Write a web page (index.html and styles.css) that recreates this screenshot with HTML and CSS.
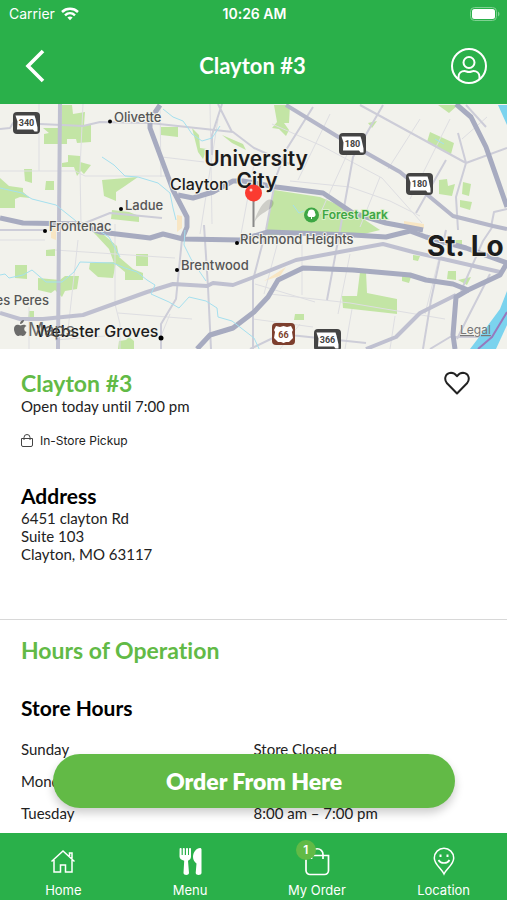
FILE: index.html
```
<!DOCTYPE html>
<html lang="en">
<head>
    <meta charset="UTF-8">
    <meta content="width=device-width, initial-scale=1.0" name="viewport">
    <title>Clayton #3</title>
    <link rel="stylesheet" href="styles.css">
</head>
<body>
<div class="screen">
    <header class="top">
        <div class="status-bar">
            <div class="carrier">
                <span>Carrier</span>
                <svg width="18" height="14" viewBox="0 0 18 14" fill="none" stroke="#fff" stroke-width="2.5" aria-hidden="true">
                    <path d="M1 5C5.500.800 12.500.800 17 5"/>
                    <path d="M4 8.300c2.900-2.700 7.100-2.700 10 0"/>
                    <path d="M6.400 10.400c1.500-1.300 3.700-1.300 5.200 0L9 13.300z" fill="#fff" stroke="none"/>
                </svg>
            </div>
            <span class="time">10:26 AM</span>
            <svg class="battery" width="30" height="14" viewBox="0 0 30 14" aria-hidden="true">
                <rect x=".5" y=".5" width="26" height="13" rx="4" fill="none" stroke="#7fd192"/>
                <rect x="2" y="2" width="23" height="10" rx="2.500" fill="#fff"/>
                <path d="M28 4.500c2 1 2 4 0 5z" fill="#7fd192"/>
            </svg>
        </div>
        <div class="nav-bar">
            <button class="icon-button" type="button" aria-label="Back">
                <svg width="36" height="36" viewBox="0 0 36 36" fill="none" stroke="#fff" stroke-width="3.600">
                    <path d="M25 3L10 18l15 15"/>
                </svg>
            </button>
            <h1>Clayton #3</h1>
            <button class="icon-button" type="button" aria-label="Account">
                <svg width="36" height="36" viewBox="0 0 36 36" fill="none" stroke="#fff" stroke-width="2">
                    <circle cx="18" cy="18" r="17"/>
                    <circle cx="18" cy="14.500" r="5.500"/>
                    <path d="M7.500 31v-2c0-4 3-6 6-6 1.500 0 2.500 1 4.500 1s3-1 4.500-1c3 0 6 2 6 6v2"/>
                </svg>
            </button>
        </div>
    </header>

    <main>
        <svg class="map" viewBox="0 0 507 245" preserveAspectRatio="xMidYMid slice" role="img" aria-label="Map of Clayton">
            <defs>
                <g id="state-shield">
                    <rect width="27" height="22" rx="4"/>
                    <path d="M2.500 3.500h19l1 3 2 9v4h-3l-1.500-2H4l.5-8z"/>
                </g>
            </defs>
            <rect class="land" x="-300" width="1107" height="245"/>

            <!-- parks -->
            <g class="park">
                <path d="M62 1l10 0 1 9 12-2-1 13 7 0v17l-14 1-1-4-9 0v5l-23 0 0-10 5-1-6-5 18 0z"/>
                <path d="M161 23h17v10l-17-2zM62 59l6-1v-7l12 1v6l11 3-7 9-3-3-4 5-3-9-12 0z"/>
                <path d="M24 65l8 0v14l-7-2zM46 77h8v9h-9zM0 74l9 8 14 2v4l7 6-10-1-5 2v9l-15 0z"/>
                <path d="M102 76l36-3-13 9-9 6 0 9-12-5zM112 106l17 2 10 4v6l-28-3z"/>
                <path d="M192 24l7 7 1 13 7 1-4 10-5-7zM222 31l21 9 3 6-14-7z"/>
                <path d="M274 1l16 0-1 18-5 0 5 7-3 6-7-7-7-1 5-6z"/>
                <path d="M266 126l8-40 46 7 30 13 30 20-20 5H266z"/>
                <path d="M430 28l24 11-3 11-24-12zM438 1h20l-9 8zM368 19l9-2-5 7zM439 76l8-1 1 7 7-2-3 12-13-2zM463 78l8 2-2 12-7-2zM460 96l12 2-2 8-10-3z"/>
                <path d="M90 159l26-1-3 16-15-1-9-8zM136 150l12 0v12l-12 0zM15 161l12 0v14l-12-1zM38 174l22 2 5-4h14l-2 13-12 2-3 6-7-7-4 3-13-3zM46 146l9-1v7h-9zM29 207h5v9l-6-1z"/>
                <path d="M93 128l11 3 13 11 2 11 14 12 10 4v7h-18v-8l-11-9-5-14-13-14zM119 237l7-1 3-3 5 4v8h-16z"/>
                <path d="M360 168l6 0 1 21 30 6v15l-54-6-1-12 15 0zM295 210h9v6h-10zM448 167l8 0v9l-9-1zM402 171l9 2-2 6-7-2zM413 151l7 1-2 5-5-1zM458 176l13-3-4 8zM455 136l7 0v7h-7z"/>
            </g>
            <path class="sand" d="M177 111l5 1v12l-5 4zM51 121h5v15l-5-2zM264 177l22-14-6 9zM404 117l20 3v4l-20-2z"/>

            <!-- minor streets -->
            <g class="street">
                <path d="M0 67h75l10 5 82 0M39 0v67M83 0l-3 65 1 55M160 1l1 72M162 53l42 5M210 0l2 120M218 15L200 130M254 60l-13 70"/>
                <path d="M0 136h45M78 136l-10 90M55 146l120 8M118 209l74 6M29 203v42M115 120l0 80 5 20v25M55 236l50-4M170 210l-9 22M272 20l50 22 60 32 40 45M290 77l60 6 40 14 30 15"/>
                <path d="M350 44L320 110M330 10l-32 66M380 73l-20 50M420 15l-32 50M450 15l-40 80M280 130l-16 60M270 190l80 9 95 16M300 220l-20 25M352 205l-7 40M395 212l-5 33M302 131l0 60M350 150l-12 60M440 150l-15 60M255 180l60 18M253 215l60 8M462 35l25-22"/>
            </g>
            <g class="road">
                <path d="M0 25l10-1 3-5 27 1 43 2 17-4 50 1 83 9 21 16 40 18"/>
                <path d="M218 0l14 28M222 0l-10 31v20M204 121l4 62 3 62M182 135l-6 60-15 25v25M0 126h45M80 121l30-12 52 5"/>
                <path d="M360 1l106 58 41-15M313 3l-27 43-10 27-10 53-13 50v69M466 59l-10 34 2 33M383 1l-30 52-13 73-13 70M486 23l-20-22M466 59l-8-30M446 56l-30 53M446 126l-15 70-8 49M493 122l-10 15-22 50M507 105l-13 3-3 15M430 245l20-12h57M490 170l-23 45-10 20M290 231l76 8M250 245l25-12 20-2"/>
            </g>
            <path class="road wide" d="M286 1l54 33 60 34 30 25 23 19 40 10 14 3"/>
            <g class="highway">
                <path d="M60 0l-1 120-1 125"/>
                <path d="M0 209l20 6 23 0 40-4 64-23 26-8 34 2 6-3 20 2 21-8 42-17 87-16 30 8 87 20"/>
                <path d="M456 191l-36 18-24 24-30 12"/>
            </g>
            <g class="highway dark">
                <path d="M160 1l-10 15v8l23 62 14 27v10l-5 12"/>
                <path d="M178 91l15 3 20-6 20-11 10 0 33 6 47 6 30 20 33 10 37 7"/>
                <path d="M0 114l23 5 57 1 20 8 50 6 13-4 20 5 57 1 28-8 85 3 33 2 24-6 16 6 40 11 41 15"/>
                <path d="M456 0l15 13 15 30 21 60"/>
                <path d="M197 245l13-14 23-7 21-16 14-15 10-17 25-12 50 2 57 5 16 5 27 4 15 6 32-15 7-12"/>
                <path d="M468 186l-12 7-3 38 2 14"/>
            </g>

            <!-- creeks and river -->
            <g class="creek">
                <path d="M102 53l12 8 11 11 13 1 20 6 12 10 3 15 3 12M0 84l22 5 10 6 24 6 20 16"/>
                <path d="M163 5l10 8 10 4 5 7 4 6 10 7 10-3 8-12M0 171l5-1 4 4 14-3 9-5 14 12 16 0 12-10 6-10 33 1 12 5 12 4 10 8 8 5-4 9 18 8 10 6 10-11 17 4 11 7 1 9 14 4 22 17 8 17"/>
                <path d="M95 124l14 9 11 20M185 126l-1 15 7 14 15 22M293 101l6 8 5-2M435 35l9 5"/>
            </g>
            <path class="river" d="M470 245l16-21 14-19 7-18v58zM498 1h9v20z"/>
            <path class="land" d="M496 245l11-24v24z"/>
            <path class="border" d="M478 245l14-12 15-25"/>

            <!-- route shields -->
            <g class="shield">
                <use href="#state-shield" x="13" y="8"/>
                <text x="26.500" y="22">340</text>
                <use href="#state-shield" x="339" y="29"/>
                <text x="352.500" y="43">180</text>
                <use href="#state-shield" x="406" y="69"/>
                <text x="419.500" y="83">180</text>
                <use href="#state-shield" x="314" y="225"/>
                <text x="327.500" y="239">366</text>
            </g>
            <g class="shield brown">
                <rect x="272" y="219" width="23" height="22" rx="4"/>
                <path d="M276 222l4 1 3.500-1 3.500 1 4-1 2 4-1 2 1 6-4 4-3 0-2.500 1-2.500-1-3 0-4-4 1-6-1-2z"/>
                <text x="283.500" y="234">66</text>
            </g>

            <g class="towns">
                <text x="114" y="18">Olivette</text>
                <text x="125" y="106">Ladue</text>
                <text x="49" y="127">Frontenac</text>
                <text x="181" y="166">Brentwood</text>
                <text x="240" y="140">Richmond Heights</text>
                <text x="49" y="201" text-anchor="end">es Peres</text>
            </g>
            <g class="dots">
                <circle cx="110" cy="17.500" r="2"/>
                <circle cx="121" cy="105" r="2"/>
                <circle cx="45" cy="127" r="2"/>
                <circle cx="177" cy="166" r="2"/>
                <circle cx="237" cy="139" r="2"/>
                <circle cx="161" cy="234" r="2.500"/>
            </g>
            <g class="cities">
                <text x="170" y="86">Clayton</text>
                <text x="36" y="233">Webster Groves</text>
                <text class="large" x="256" y="62" text-anchor="middle">University</text>
                <text class="large" x="257" y="84" text-anchor="middle">City</text>
                <text class="huge" x="427" y="152">St. Lo</text>
            </g>
            <g class="maps-logo">
                <path d="M20 220c0-3 2-4 4-4 0 2-2 4-4 4zM19 221c-3-1-5 1-5 4s2 7 4 7c1 0 1-.5 2.500-.5s1.500.5 2.500.5c2 0 3-3 3.500-4-3-1-3-5 0-6-2-2-4-1-6-.500-.5 0-1-.3-1.500-.5z"/>
                <text x="28" y="232">Maps</text>
            </g>
            <g class="forest">
                <circle cx="311.500" cy="111" r="7.500"/>
                <path d="M311 115v-2h-2a2.500 2.500 0 0 1-1-4 3.500 3.500 0 0 1 7 0 2.500 2.500 0 0 1-1 4h-2v2z"/>
                <text x="322" y="115">Forest Park</text>
            </g>
            <text class="legal" x="460" y="230">Legal</text>

            <path class="pin-shadow" d="M254 119c2-9 7-18 12-22 6-4 10 1 6 6-5 5-14 7-18 16z"/>
            <path class="pin-stem" d="M253.500 96v27"/>
            <circle class="pin" cx="253.500" cy="89" r="8.500"/>
            <circle cx="251" cy="86" r="1.500" fill="#ffc9c4"/>
        </svg>

        <section class="store">
            <div class="store-head">
                <h2>Clayton #3</h2>
                <button class="favorite" type="button" aria-label="Add to favorites">
                    <svg width="26" height="24" viewBox="0 0 26 24" fill="none" stroke="#222" stroke-width="2" stroke-linejoin="round">
                        <path d="M13 22.500L3 12.300C-.500 8 1.500 2 7 1.700c2.500 0 4.500 1.300 6 3.500 1.500-2.200 3.500-3.500 6-3.500 5.500.300 7.500 6.300 4 10.600z"/>
                    </svg>
                </button>
            </div>
            <p>Open today until 7:00 pm</p>
            <p class="pickup">
                <svg width="12" height="14" viewBox="0 0 12 14" fill="none" stroke="#444" aria-hidden="true">
                    <path d="M.5 4.500h11v6.500a1.500 1.500 0 0 1-1.500 1.500H2A1.500 1.500 0 0 1 .5 11zM3 6V3.500a3 3 0 0 1 6 0V6"/>
                </svg>
                <span>In-Store Pickup</span>
            </p>
            <h3>Address</h3>
            <address>
                6451 clayton Rd<br>
                Suite 103<br>
                Clayton, MO 63117
            </address>
        </section>

        <section class="hours">
            <h2>Hours of Operation</h2>
            <h3>Store Hours</h3>
            <table>
                <tr>
                    <th scope="row">Sunday</th>
                    <td>Store Closed</td>
                </tr>
                <tr>
                    <th scope="row">Monday</th>
                    <td>8:00 am – 7:00 pm</td>
                </tr>
                <tr>
                    <th scope="row">Tuesday</th>
                    <td>8:00 am – 7:00 pm</td>
                </tr>
            </table>
        </section>
    </main>

    <footer class="bottom">
        <button class="order" type="button">Order From Here</button>
        <nav class="tabs">
            <a href="#home">
                <svg width="28" height="30" viewBox="0 0 28 30" fill="none" stroke="#fff" stroke-width="1.500" aria-hidden="true">
                    <path d="M2.500 15.500L14 5l11.500 10.500M5 14v12h6.500v-7h5v7H23V14M20.500 10V7H23v5.500"/>
                </svg>
                <span>Home</span>
            </a>
            <a href="#menu">
                <svg width="28" height="30" viewBox="0 0 28 30" fill="#fff" aria-hidden="true">
                    <path d="M4.500 2c.9 0 1.100.500 1.100 1v6h1.200V3c0-1.300 2-1.300 2 0v6H10V3c0-1.300 2-1.300 2 0v6h1V3c0-1.300 2-1.300 2 0v7.500c0 2.200-1.300 3.500-3 4.200l1 12.300c0 2.500-5.500 2.500-5.500 0l.7-12.300c-2.700-.7-4.700-2-4.700-4.200L3.600 3c0-.6.300-1 .9-1zM24 2c1 0 1.500.700 1.500 1.500V27c0 2.500-5.800 2.500-5.800 0l.8-9.500C18.500 16 17 14 17 11c0-5 3.500-9 7-9z"/>
                </svg>
                <span>Menu</span>
            </a>
            <a href="#order">
                <svg width="28" height="30" viewBox="0 0 28 30" fill="none" stroke="#fff" stroke-width="1.700" aria-hidden="true">
                    <path d="M3 9.500h22.500v15a4 4 0 0 1-4 4H7a4 4 0 0 1-4-4zM8.500 13V8.500a5.500 5.500 0 0 1 11.500 0V13"/>
                </svg>
                <span class="badge">1</span>
                <span>My Order</span>
            </a>
            <a href="#location">
                <svg width="28" height="30" viewBox="0 0 28 30" fill="none" stroke="#fff" stroke-width="1.500" aria-hidden="true">
                    <path d="M14 28C11 22 4.300 18.500 4.300 12a9.700 9.700 0 0 1 19.400 0C23.700 18.500 17 22 14 28z"/>
                    <path d="M8.500 14c2 4 9 4 11 0" stroke-width="1.700"/>
                    <path d="M10.500 8.500v2.500M17.500 8.500v2.500" stroke-width="2"/>
                </svg>
                <span>Location</span>
            </a>
        </nav>
    </footer>
</div>
</body>
</html>
```

FILE: styles.css
```
* {
    box-sizing: border-box;
}

body {
    margin: 0;
    background-color: #fff;
    color: #222;
    font-family: Lato, "Open Sans", sans-serif;
    font-size: 15px;
    font-variant-ligatures: none;
    line-height: 18px;
}

h1, h2, h3, p {
    margin: 0;
}

button {
    border: 0;
    padding: 0;
    background: none;
    font-family: inherit;
    cursor: pointer;
}

svg {
    display: block;
}

.screen {
    display: flex;
    flex-direction: column;
    height: 100vh;
}

/* header */
.top {
    flex: none;
    background: #2ab04a;
    color: #fff;
}

.status-bar {
    display: grid;
    grid-template-columns: 1fr auto 1fr;
    align-items: center;
    height: 28px;
    padding: 0 7px 0 9px;
    font-family: Inter, sans-serif;
    font-size: 14px;
}

.carrier {
    display: flex;
    gap: 6px;
    align-items: center;
}

.time {
    font-weight: 600;
}

.battery {
    justify-self: end;
}

.nav-bar {
    display: flex;
    align-items: center;
    justify-content: space-between;
    height: 76px;
    padding: 0 20px 0 18px;
}

.nav-bar h1 {
    font-size: 22px;
    line-height: 28px;
}

/* map */
main {
    flex: 1;
    min-height: 0;
    overflow-y: auto;
    scrollbar-width: none;
}

.map {
    width: 100%;
    height: 245px;
    font-family: Inter, sans-serif;
}

.land {
    fill: #f2f2ec;
}

.park {
    fill: #c3e5a5;
}

.sand {
    fill: #f8e6c4;
}

.street, .road, .highway, .creek, .border {
    fill: none;
    stroke-linejoin: round;
}

.street {
    stroke: #dedee2;
}

.road {
    stroke: #cdcdd8;
    stroke-width: 2;
}

.wide {
    stroke: #b5b7c9;
    stroke-width: 4;
}

.highway {
    stroke: #bfc0d0;
    stroke-width: 4;
}

.dark {
    stroke: #a7abc0;
    stroke-width: 5;
}

.creek {
    stroke: #a5e0ef;
}

.river {
    fill: #7bd3ee;
}

.border {
    stroke: #9779bd;
    stroke-width: 2;
}

.shield {
    fill: #444;
}

#state-shield path, .shield path {
    fill: #fff;
}

.shield text {
    font-family: Roboto, sans-serif;
    font-size: 9px;
    font-weight: 700;
    text-anchor: middle;
}

.brown {
    fill: #7d3f2e;
}

.towns text, .cities text, .forest text {
    paint-order: stroke;
    stroke: #f2f2ec;
    stroke-width: 2px;
}

.towns {
    fill: #555;
    font-size: 13px;
    font-weight: 500;
}

.cities {
    fill: #1c1c1c;
    font-size: 16px;
    font-weight: 500;
}

.large {
    font-size: 21px;
    font-weight: 600;
}

.huge {
    font-size: 28px;
    font-weight: 700;
}

.maps-logo {
    fill: #555;
    font-size: 18px;
    opacity: 0.85;
}

.forest {
    fill: #3da644;
    font-size: 12px;
    font-weight: 600;
}

.forest path {
    fill: #fff;
}

.forest text {
    stroke: #d9efc8;
}

.legal {
    fill: #777;
    font-size: 12px;
    text-decoration: underline;
}

.pin {
    fill: #fb3b30;
}

.pin-stem {
    stroke: #888;
    stroke-width: 2;
}

.pin-shadow {
    fill: #000;
    opacity: 0.15;
}

/* store details */
h2 {
    color: #62ba46;
    font-size: 23px;
    line-height: 28px;
}

h3 {
    color: #000;
    font-size: 21px;
    line-height: 26px;
}

.store, .hours {
    padding: 20px 21px;
}

.store {
    border-bottom: 1px solid #d8d8d8;
    padding-bottom: 56px;
}

.store-head {
    display: flex;
    align-items: center;
    justify-content: space-between;
    padding-right: 16px;
}

.pickup {
    display: flex;
    gap: 7px;
    align-items: center;
    margin: 17px 0 33px;
    font-family: Inter, sans-serif;
    font-size: 12px;
}

address {
    font-style: normal;
}

.hours {
    padding: 16px 21px 0;
}

.hours h3 {
    margin: 31px 0 12px;
}

table {
    width: 100%;
    border-collapse: collapse;
    table-layout: fixed;
}

th, td {
    height: 32px;
    padding: 0;
    font-weight: 400;
    text-align: left;
}

/* order button and tabs */
.bottom {
    position: relative;
    flex: none;
    background: #2ab04a;
}

.order {
    position: absolute;
    right: 52px;
    bottom: calc(100% + 25px);
    left: 53px;
    height: 54px;
    border-radius: 27px;
    background: #62ba46;
    box-shadow: 0 5px 10px rgba(0, 0, 0, 0.2);
    color: #fff;
    font-size: 23px;
    font-weight: 800;
}

.tabs {
    display: grid;
    grid-template-columns: repeat(4, 1fr);
    height: 67px;
}

.tabs a {
    position: relative;
    display: flex;
    flex-direction: column;
    align-items: center;
    padding-top: 13px;
    color: #fff;
    font-family: Inter, sans-serif;
    font-size: 13px;
    line-height: 16px;
    text-decoration: none;
}

.tabs a > span:last-child {
    margin-top: 6px;
}

.badge {
    position: absolute;
    top: 7px;
    left: calc(50% - 21px);
    width: 20px;
    height: 20px;
    border-radius: 50%;
    background: #62ba46;
    font-size: 12px;
    font-weight: 600;
    line-height: 20px;
    text-align: center;
}
```
